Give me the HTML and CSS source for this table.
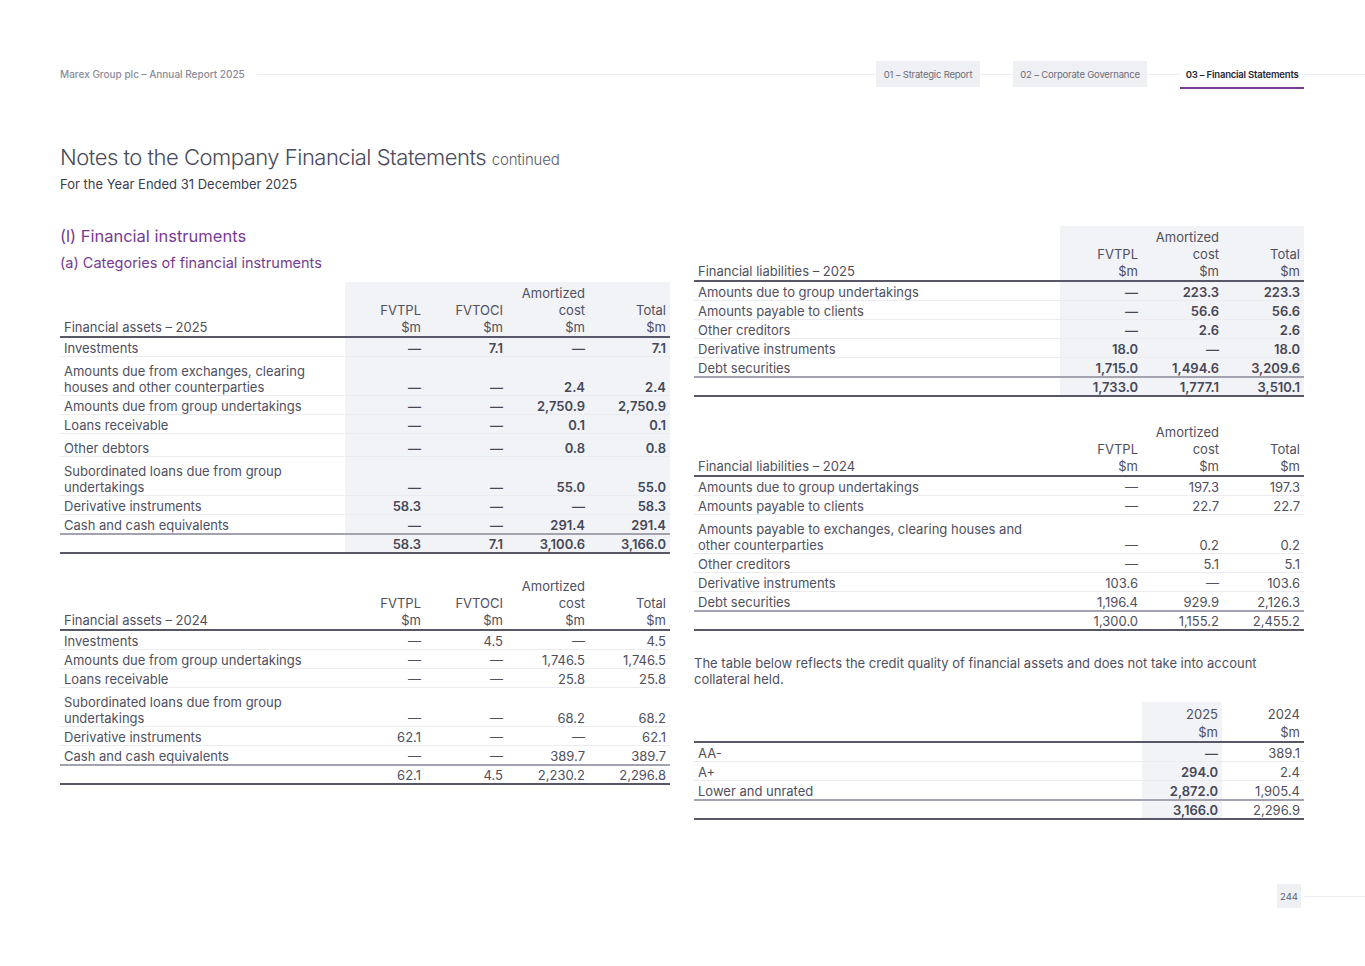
FILE: index.html
```html
<!DOCTYPE html>
<html lang="en">
<head>
<meta charset="utf-8">
<title>Notes to the Company Financial Statements</title>
<link rel="stylesheet" href="styles.css">
</head>
<body>
<div class="page">
  <header class="topbar">
    <span class="doc">Marex Group plc – Annual Report 2025</span>
    <span class="rule grow"></span>
    <a class="tab">01 – Strategic Report</a>
    <span class="rule gap"></span>
    <a class="tab">02 – Corporate Governance</a>
    <span class="rule gap"></span>
    <a class="tab active">03 – Financial Statements</a>
    <span class="rule tail"></span>
  </header>

  <section class="intro">
    <h1 class="title">Notes to the Company Financial Statements <span class="cont">continued</span></h1>
    <p class="sub">For the Year Ended 31 December 2025</p>
  </section>

  <div class="cols">
    <div class="col">
      <h2 class="h2">(l) Financial instruments</h2>
      <h3 class="h3">(a) Categories of financial instruments</h3>

      <table class="fin t-assets bold">
        <colgroup><col class="c-label-a"><col class="c80"><col class="c82"><col class="c82"><col class="c81"></colgroup>
        <thead>
          <tr><th class="lab">Financial assets – 2025</th><th class="s">FVTPL<br>$m</th><th class="s">FVTOCI<br>$m</th><th class="s">Amortized<br>cost<br>$m</th><th class="s">Total<br>$m</th></tr>
        </thead>
        <tbody>
          <tr><td>Investments</td><td class="s">—</td><td class="s">7.1</td><td class="s">—</td><td class="s">7.1</td></tr>
          <tr class="two"><td>Amounts due from exchanges, clearing houses and other counterparties</td><td class="s">—</td><td class="s">—</td><td class="s">2.4</td><td class="s">2.4</td></tr>
          <tr><td>Amounts due from group undertakings</td><td class="s">—</td><td class="s">—</td><td class="s">2,750.9</td><td class="s">2,750.9</td></tr>
          <tr><td>Loans receivable</td><td class="s">—</td><td class="s">—</td><td class="s">0.1</td><td class="s">0.1</td></tr>
          <tr class="tall"><td>Other debtors</td><td class="s">—</td><td class="s">—</td><td class="s">0.8</td><td class="s">0.8</td></tr>
          <tr class="two"><td>Subordinated loans due from group undertakings</td><td class="s">—</td><td class="s">—</td><td class="s">55.0</td><td class="s">55.0</td></tr>
          <tr><td>Derivative instruments</td><td class="s">58.3</td><td class="s">—</td><td class="s">—</td><td class="s">58.3</td></tr>
          <tr><td>Cash and cash equivalents</td><td class="s">—</td><td class="s">—</td><td class="s">291.4</td><td class="s">291.4</td></tr>
          <tr class="total"><td></td><td class="s">58.3</td><td class="s">7.1</td><td class="s">3,100.6</td><td class="s">3,166.0</td></tr>
        </tbody>
      </table>

      <table class="fin t-assets t-gap">
        <colgroup><col class="c-label-a"><col class="c80"><col class="c82"><col class="c82"><col class="c81"></colgroup>
        <thead>
          <tr><th class="lab">Financial assets – 2024</th><th>FVTPL<br>$m</th><th>FVTOCI<br>$m</th><th>Amortized<br>cost<br>$m</th><th>Total<br>$m</th></tr>
        </thead>
        <tbody>
          <tr><td>Investments</td><td>—</td><td>4.5</td><td>—</td><td>4.5</td></tr>
          <tr><td>Amounts due from group undertakings</td><td>—</td><td>—</td><td>1,746.5</td><td>1,746.5</td></tr>
          <tr><td>Loans receivable</td><td>—</td><td>—</td><td>25.8</td><td>25.8</td></tr>
          <tr class="two"><td>Subordinated loans due from group undertakings</td><td>—</td><td>—</td><td>68.2</td><td>68.2</td></tr>
          <tr><td>Derivative instruments</td><td>62.1</td><td>—</td><td>—</td><td>62.1</td></tr>
          <tr><td>Cash and cash equivalents</td><td>—</td><td>—</td><td>389.7</td><td>389.7</td></tr>
          <tr class="total"><td></td><td>62.1</td><td>4.5</td><td>2,230.2</td><td>2,296.8</td></tr>
        </tbody>
      </table>
    </div>

    <div class="col">
      <table class="fin bold">
        <colgroup><col class="c-label-l"><col class="c82"><col class="c81"><col class="c81"></colgroup>
        <thead>
          <tr><th class="lab">Financial liabilities – 2025</th><th class="s">FVTPL<br>$m</th><th class="s">Amortized<br>cost<br>$m</th><th class="s">Total<br>$m</th></tr>
        </thead>
        <tbody>
          <tr><td>Amounts due to group undertakings</td><td class="s">—</td><td class="s">223.3</td><td class="s">223.3</td></tr>
          <tr><td>Amounts payable to clients</td><td class="s">—</td><td class="s">56.6</td><td class="s">56.6</td></tr>
          <tr><td>Other creditors</td><td class="s">—</td><td class="s">2.6</td><td class="s">2.6</td></tr>
          <tr><td>Derivative instruments</td><td class="s">18.0</td><td class="s">—</td><td class="s">18.0</td></tr>
          <tr><td>Debt securities</td><td class="s">1,715.0</td><td class="s">1,494.6</td><td class="s">3,209.6</td></tr>
          <tr class="total"><td></td><td class="s">1,733.0</td><td class="s">1,777.1</td><td class="s">3,510.1</td></tr>
        </tbody>
      </table>

      <table class="fin t-gap2">
        <colgroup><col class="c-label-l"><col class="c82"><col class="c81"><col class="c81"></colgroup>
        <thead>
          <tr><th class="lab">Financial liabilities – 2024</th><th>FVTPL<br>$m</th><th>Amortized<br>cost<br>$m</th><th>Total<br>$m</th></tr>
        </thead>
        <tbody>
          <tr><td>Amounts due to group undertakings</td><td>—</td><td>197.3</td><td>197.3</td></tr>
          <tr><td>Amounts payable to clients</td><td>—</td><td>22.7</td><td>22.7</td></tr>
          <tr class="two"><td>Amounts payable to exchanges, clearing houses and other counterparties</td><td>—</td><td>0.2</td><td>0.2</td></tr>
          <tr><td>Other creditors</td><td>—</td><td>5.1</td><td>5.1</td></tr>
          <tr><td>Derivative instruments</td><td>103.6</td><td>—</td><td>103.6</td></tr>
          <tr><td>Debt securities</td><td>1,196.4</td><td>929.9</td><td>2,126.3</td></tr>
          <tr class="total"><td></td><td>1,300.0</td><td>1,155.2</td><td>2,455.2</td></tr>
        </tbody>
      </table>

      <p class="para">The table below reflects the credit quality of financial assets and does not take into account collateral held.</p>

      <table class="fin t-credit">
        <colgroup><col class="c-label-c"><col class="c80"><col class="c82"></colgroup>
        <thead>
          <tr><th class="lab"></th><th class="s">2025<br>$m</th><th>2024<br>$m</th></tr>
        </thead>
        <tbody>
          <tr><td>AA-</td><td class="s b">—</td><td>389.1</td></tr>
          <tr><td>A+</td><td class="s b">294.0</td><td>2.4</td></tr>
          <tr><td>Lower and unrated</td><td class="s b">2,872.0</td><td>1,905.4</td></tr>
          <tr class="total"><td></td><td class="s b">3,166.0</td><td>2,296.9</td></tr>
        </tbody>
      </table>
    </div>
  </div>

  <footer class="foot">
    <span class="pageno">244</span>
    <span class="rule tail"></span>
  </footer>
</div>
</body>
</html>
```

FILE: styles.css
```css
* { box-sizing: border-box; }
html, body { margin: 0; padding: 0; background: #ffffff; }
body {
  font-family: Inter, "Noto Sans", "Liberation Sans", sans-serif;
  color: #4a4a59;
}
.page {
  width: 1365px;
  padding-left: 60px;
}

/* top bar */
.topbar {
  display: flex;
  align-items: center;
  height: 26px;
  margin-top: 61px;
}
.doc {
  font-size: 10px;
  font-weight: 500;
  color: #8b8b97;
  white-space: nowrap;
}
.rule {
  height: 1px;
  background: #eeeef2;
}
.rule.grow { flex: 1; margin-left: 12px; }
.rule.gap { width: 33px; }
.rule.tail { width: 61px; }
.tab {
  height: 26px;
  display: flex;
  align-items: center;
  padding: 0 7.5px;
  background: #eef0f4;
  font-size: 9.5px;
  letter-spacing: -0.2px;
  color: #6c6c7a;
  white-space: nowrap;
}
.tab.active {
  background: #ffffff;
  color: #262636;
  font-weight: 600;
  padding: 0 5.5px;
  border-bottom: 2px solid #7b3a96;
  height: 28px;
  margin-top: 2px;
}

/* intro */
.intro { margin-top: 57px; width: 1244px; }
.title {
  margin: 0;
  font-size: 22px;
  line-height: 26px;
  font-weight: 300;
  letter-spacing: -0.5px;
  color: #4a4a5a;
}
.cont {
  font-size: 15px;
  letter-spacing: -0.2px;
  color: #5a5a68;
}
.sub {
  margin: 2px 0 0;
  font-size: 13px;
  line-height: 18px;
  color: #3d3d4b;
}

/* columns */
.cols {
  display: grid;
  grid-template-columns: 610px 610px;
  column-gap: 24px;
  margin-top: 33px;
}
.h2 {
  margin: 0;
  font-size: 16.5px;
  line-height: 20px;
  font-weight: 400;
  color: #773a92;
}
.h3 {
  margin: 7px 0 0;
  font-size: 14.5px;
  line-height: 20px;
  font-weight: 400;
  color: #773a92;
}
.h3 + .fin { margin-top: 9px; }

/* tables */
.fin {
  width: 610px;
  border-collapse: collapse;
  table-layout: fixed;
  font-size: 13px;
  line-height: 16px;
  color: #4f4f5e;
}
.c-label-a { width: 285px; }
.c-label-l { width: 366px; }
.c-label-c { width: 448px; }
.c80 { width: 80px; }
.c81 { width: 81px; }
.c82 { width: 82px; }

.fin th {
  font-weight: 400;
  text-align: right;
  vertical-align: bottom;
  padding: 3px 4px 0;
  line-height: 17px;
  border-bottom: 2px solid #575768;
}
.fin th.lab { text-align: left; }
.fin td {
  text-align: right;
  vertical-align: bottom;
  padding: 2px 4px 0;
  border-bottom: 1px solid #ebebf0;
}
.fin td:first-child { text-align: left; }
.fin .s { background: #f2f3f6; }
.fin.bold td:not(:first-child) { font-weight: 600; color: #474756; }
.fin td.b { font-weight: 600; color: #474756; }

.fin tr.two td { padding-top: 6px; }
.fin tr.tall td { padding-top: 6px; }
.fin tr.total td {
  padding-top: 1px;
  border-top: 2px solid #a3a3b0;
  border-bottom: 2px solid #575768;
}

.t-gap { margin-top: 21px; }
.t-gap2 { margin-top: 24px; }
.t-credit { margin-top: 15px; }
.t-credit th { line-height: 18px; padding-top: 3px; }

.para {
  margin: 24px 0 0;
  font-size: 13px;
  line-height: 16px;
  color: #4f4f5e;
  width: 590px;
}

/* footer */
.foot {
  display: flex;
  align-items: center;
  justify-content: flex-end;
  margin-top: 64px;
}
.pageno {
  width: 24px;
  height: 24px;
  display: flex;
  align-items: center;
  justify-content: center;
  background: #eef0f4;
  font-size: 9.5px;
  color: #5c5c6a;
  margin-right: 3px;
}
```
